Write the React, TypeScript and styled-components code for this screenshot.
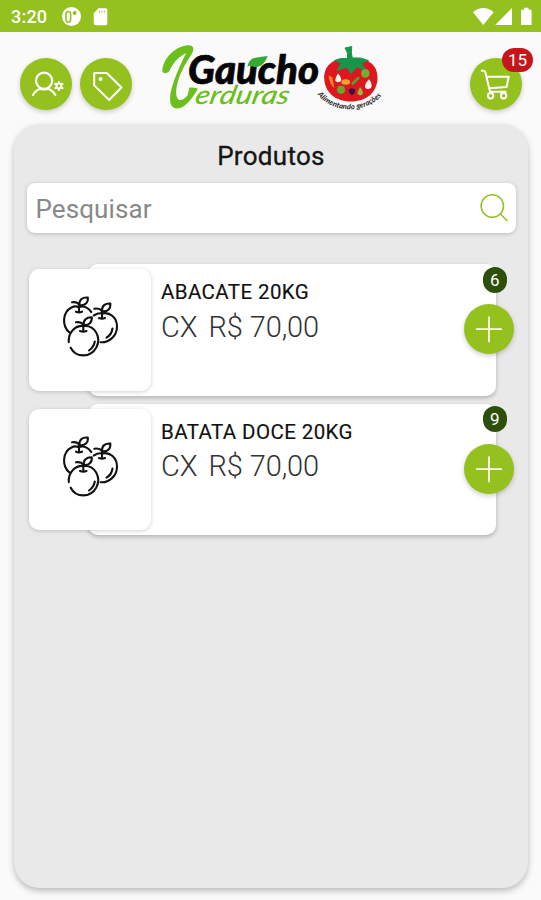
import React from "react";
import styled, { createGlobalStyle } from "styled-components";

const GREEN = "#95c11f";

const GlobalStyle = createGlobalStyle`
  * { box-sizing: border-box; }
  body { margin: 0; background: #fafafa; font-family: Roboto, "Liberation Sans", sans-serif; }
  svg { display: block; flex: none; }
`;

const Screen = styled.div`
  display: flex;
  flex-direction: column;
  height: 900px;
  overflow: hidden;
  background: #fafafa;
`;

const StatusBar = styled.div`
  height: 32px;
  flex: none;
  display: flex;
  align-items: center;
  padding: 1px 9px 0 11px;
  background: ${GREEN};
  color: #fff;
`;

const Clock = styled.span`
  width: 51px;
  font-size: 18px;
  font-weight: 500;
  line-height: 32px;
  letter-spacing: 0.2px;
`;

const StatusRight = styled.div`
  margin-left: auto;
`;

const Header = styled.header`
  height: 92px;
  flex: none;
  display: flex;
  align-items: flex-start;
  padding: 6px 19px 0 20px;
`;

const Actions = styled.div`
  display: flex;
  gap: 8px;
  margin-top: 20px;
`;

const LogoBox = styled.div`
  margin-left: 23px;
`;

const RoundButton = styled.button<{ $size: number }>`
  position: relative;
  width: ${(p) => p.$size}px;
  height: ${(p) => p.$size}px;
  padding: 0;
  border: 0;
  border-radius: 50%;
  background: ${GREEN};
  box-shadow: 0 2px 5px rgba(0, 0, 0, 0.2);
`;

const CartArea = styled.div`
  margin: 20px 0 0 auto;
`;

const CartBadge = styled.span`
  position: absolute;
  left: 32px;
  top: -10px;
  width: 31px;
  height: 24px;
  border-radius: 12px;
  background: #c4161c;
  color: #fff;
  font: 400 17px/25px Roboto, sans-serif;
  text-align: center;
`;

const Panel = styled.main`
  width: 514px;
  height: 764px;
  margin-left: 14px;
  padding: 0 13px;
  border-radius: 26px;
  background: #e9e9e9;
  box-shadow: 0 3px 6px rgba(0, 0, 0, 0.25);
`;

const Title = styled.h1`
  margin: 0;
  padding-top: 15px;
  height: 59px;
  font-size: 26px;
  line-height: 34px;
  font-weight: 400;
  letter-spacing: 0.3px;
  text-align: center;
  color: #151515;
  -webkit-text-stroke: 0.3px #151515;
`;

const SearchField = styled.div`
  height: 50px;
  display: flex;
  align-items: center;
  justify-content: space-between;
  margin-right: -1px;
  padding: 0 7px 0 8.5px;
  border-radius: 8px;
  background: #fff;
  box-shadow: 0 1px 4px rgba(0, 0, 0, 0.2);
`;

const Placeholder = styled.span`
  padding-top: 2px;
  font-size: 26px;
  line-height: 32px;
  letter-spacing: 0.1px;
  color: #888;
`;

const List = styled.div`
  display: flex;
  flex-direction: column;
  gap: 8px;
  padding-top: 31px;
`;

const Item = styled.article`
  display: flex;
  height: 131.5px;
  padding-left: 2px;
`;

const Thumb = styled.div`
  position: relative;
  z-index: 1;
  width: 122px;
  height: 121.5px;
  margin: 5px -63px 0 0;
  border-radius: 10px;
  background: #fff;
  box-shadow: 0 1px 4px rgba(0, 0, 0, 0.18);
`;

const Card = styled.div`
  position: relative;
  width: 408px;
  height: 131.5px;
  padding: 16px 0 0 73px;
  border-radius: 10px;
  background: #fff;
  box-shadow: 0 2px 4px rgba(0, 0, 0, 0.24);
`;

const Name = styled.div`
  font-size: 20.5px;
  line-height: 25px;
  letter-spacing: 0.4px;
  color: #111;
  white-space: nowrap;
  -webkit-text-stroke: 0.15px #111;
`;

const Price = styled.div`
  display: flex;
  gap: 11px;
  margin-top: 3.5px;
  font-size: 29px;
  line-height: 36px;
  font-weight: 300;
  letter-spacing: -0.1px;
  color: #333;
`;

const Count = styled.span`
  position: absolute;
  left: 395px;
  top: 2.5px;
  width: 23.5px;
  height: 26px;
  border-radius: 13px;
  background: #2e4f0b;
  color: #fff;
  font-size: 17px;
  line-height: 26px;
  text-align: center;
`;

const AddSlot = styled.div`
  position: absolute;
  left: 376px;
  top: 40px;
`;

const StatusLeftIcons = () => (
  <svg width="48" height="20" viewBox="62 7 48 20">
    <circle cx="71.5" cy="16.5" r="9.5" fill="#fff" />
    <rect x="66" y="11.5" width="4.6" height="10.5" rx="2.3" fill="none" stroke={GREEN} strokeWidth="1.6" />
    <circle cx="74.6" cy="13" r="2" fill={GREEN} />
    <path d="M98.5 8.3H105.5Q107.3 8.3 107.3 10V23.6Q107.3 25.2 105.5 25.2H95.5Q93.8 25.2 93.8 23.6V13.3Z" fill="#fff" />
    <path d="M99.6 10.4v2.4M102 10.4v2.4M104.4 10.4v2.4" stroke={GREEN} strokeWidth="1" opacity="0.75" />
  </svg>
);

const StatusRightIcons = () => (
  <svg width="60" height="20" viewBox="472 7 60 20">
    <path d="M473 12.2Q483.2 4 493.6 12.2L483.3 25Z" fill="#fff" />
    <path d="M512 8V25H495.2Z" fill="#fff" />
    <path d="M521 9.8h3V7.7h4.6v2.1h3V25H521Z" fill="#fff" />
  </svg>
);

const UserGearIcon = () => (
  <svg width="52" height="52" fill="none" stroke="#fff" strokeWidth="2.2" strokeLinecap="round">
    <circle cx="24.1" cy="22.8" r="8.1" />
    <path d="M13 37Q15.9 31.8 20.4 30.7C22.5 31.6 25.7 31.6 27.9 30.7Q32.4 32 35.4 37" />
    <circle cx="38.9" cy="28" r="2.4" strokeWidth="2" />
    <path d="M38.9 24v.7M38.9 31.3v.7M35.3 25.9l.6.4M41.9 29.7l.6.4M35.3 30.1l.6-.4M41.9 26.3l.6-.4" strokeWidth="2" />
  </svg>
);

const TagIcon = () => (
  <svg width="52" height="52" fill="none" stroke="#fff" strokeWidth="2" strokeLinejoin="round">
    <path d="M14.2 15H26.8L41.4 29.5L29.2 42L14.2 27.4Z" />
    <circle cx="20.6" cy="21" r="1.9" fill="#fff" stroke="none" />
  </svg>
);

const CartIcon = () => (
  <svg width="52" height="52" fill="none" stroke="#fff" strokeWidth="2" strokeLinecap="round" strokeLinejoin="round">
    <path d="M11.7 12.7h2.2q1 .2 1.4 1.3L20 33.6M16.4 18.7H38.7L36.6 29L19 30.2M20 33.8h15.6" />
    <circle cx="20.6" cy="37.8" r="2.7" />
    <circle cx="33.6" cy="37.8" r="2.7" />
  </svg>
);

const SearchIcon = () => (
  <svg width="30" height="30" fill="none" stroke={GREEN} strokeWidth="1.5" strokeLinecap="round">
    <circle cx="13.3" cy="13" r="11.2" />
    <path d="M21.3 21L28 27.5" />
  </svg>
);

const PlusIcon = () => (
  <svg width="50" height="50" stroke="#fff" strokeWidth="1.7" strokeLinecap="round">
    <path d="M25 13.2V37.6M12.8 25.2H37.2" />
  </svg>
);

const FruitIcon = () => (
  <svg width="122" height="121.5" viewBox="29 269 122 121.5" fill="none" stroke="#111" strokeWidth="2.1" strokeLinecap="round" strokeLinejoin="round">
    <path d="M69.5 332.5C61.5 326 62.5 312 71.5 307.5Q75 305.5 78.8 307.2Q85.5 304.5 91.3 312" />
    <path d="M79 312V304.5Q77 301.5 72 302.3M79.5 305C79 299.5 82.5 297 87.8 297.5C88.5 302.5 85 306 79.5 305ZM76 311.7q3 1.3 6 0" />
    <path d="M93.8 315.5Q98.5 312.6 102 313.5C110 311.7 117 317.5 117 326.5C117 336.5 108.5 343 100.5 342.2" />
    <path d="M102 318V311Q99.5 307.8 94.3 308.8M102 311.2C101.6 305.7 105.3 303.2 110.3 303.5C111 308.7 107.3 312.3 102 311.2ZM99 318q3 1.3 6 0M112.5 328.5Q111.6 334.8 106.5 337.6" />
    <path d="M70.7 347.7C76 358 90.5 358 96.3 347.5C101.8 337 94.5 325 84 326C75.5 325 68 332 68.8 342.2" />
    <path d="M83.3 331V324.5Q81 321.5 76 322.3M83.6 325C83.2 320 86.5 317 91.8 317.3C92.2 322.3 89 325.7 83.6 325ZM80 331q3.3 1.3 6.5 0M94.8 341.5Q93.8 347.2 89 350.5" />
  </svg>
);

const Logo = () => (
  <svg width="235" height="80" viewBox="155 38 235 80" role="img" aria-label="Gaúcho Verduras">
    <path d="M162.3 71C163 57.5 176 46 188 45.2C194.8 44.7 194.5 50.5 190.5 56C182 68.5 177 80 176.2 91C175.8 101.5 181 102.8 187.5 95.5L189.5 87.5Q194 87 198 88.8C192 99 184.5 109.2 176.5 108.5C165 107 169.5 86 186.2 53C178.5 56.5 173 63 169.2 71.2C166.5 73.8 163 73.8 162.3 71Z" fill="#6abf1b" />
    <text x="188" y="84" textLength="131" lengthAdjust="spacingAndGlyphs" fontFamily="Lato" fontWeight="900" fontStyle="italic" fontSize="40" fill="#050505" stroke="#050505" strokeWidth="0.7">Gaucho</text>
    <path d="M247.5 67C249 57 256 57.5 267.5 56C264 66.5 257.5 69 249.5 65.5Z" fill="#35a936" />
    <text transform="translate(194 103.5) skewX(-12)" textLength="94" lengthAdjust="spacingAndGlyphs" fontFamily="Lato" fontStyle="italic" fontWeight="500" fontSize="26" fill="#6abf1b">erduras</text>
    <path d="M351 59C366 56.5 378 64 377.5 78C377 93 366 101.5 351 101.5C335 101.5 324.5 92 324.2 78C324 64 336 56.5 351 59Z" fill="#dc1720" />
    <path d="M334.5 60.5Q341 57.5 347.5 58.5Q348.8 53 345 48L351.8 46.5Q350.5 52 352.3 58Q361 57 368.5 60.5L361 63L366 70L356.5 67L351 73.5L346.8 67L337 70.5L341.5 62.8Z" fill="#16964a" stroke="#16964a" strokeWidth="1" />
    <path d="M328.5 75.5L332.2 77.2L334.3 88Q329.5 84 328.5 75.5Z" fill="#f28a1a" />
    <path d="M338 73.5Q342 78 341 81Q338 83.3 335.3 81Q335 78 338 73.5ZM369 79.3Q373 84.5 371 88Q367.5 90.3 365 87.5Q364.5 84 369 79.3Z" fill="#fff7e8" />
    <ellipse cx="345.7" cy="82" rx="4.4" ry="2.7" fill="#e8a62f" />
    <circle cx="365.3" cy="73.4" r="4.3" fill="#79ad31" />
    <circle cx="341" cy="89.8" r="4" fill="#67a72c" />
    <path d="M352.7 83.5L358.3 78" stroke="#54a42d" strokeWidth="2.5" strokeLinecap="round" />
    <path d="M348.5 89.7q3-3 7 0q-1 5-3.5 5t-3.5-5" fill="#34123f" />
    <path d="M360 87Q364.5 92 362 95Q357.5 96.2 357.5 92.5Z" fill="#91bc35" />
    <path id="tagline" d="M317.5 94.5C332 113 363 115 382 95.5" fill="none" />
    <text fontFamily="Lato" fontSize="7.5" fontStyle="italic" fontWeight="700" fill="#222">
      <textPath href="#tagline" textLength="72">Alimentando gerações</textPath>
    </text>
  </svg>
);

const products = [
  { name: "ABACATE 20KG", unit: "CX", price: "R$ 70,00", count: 6 },
  { name: "BATATA DOCE 20KG", unit: "CX", price: "R$ 70,00", count: 9 },
];

export default function App() {
  return (
    <Screen>
      <GlobalStyle />
      <StatusBar>
        <Clock>3:20</Clock>
        <StatusLeftIcons />
        <StatusRight><StatusRightIcons /></StatusRight>
      </StatusBar>
      <Header>
        <Actions>
          <RoundButton $size={52} aria-label="Conta"><UserGearIcon /></RoundButton>
          <RoundButton $size={52} aria-label="Ofertas"><TagIcon /></RoundButton>
        </Actions>
        <LogoBox><Logo /></LogoBox>
        <CartArea>
          <RoundButton $size={52} aria-label="Carrinho">
            <CartIcon />
            <CartBadge>15</CartBadge>
          </RoundButton>
        </CartArea>
      </Header>
      <Panel>
        <Title>Produtos</Title>
        <SearchField>
          <Placeholder>Pesquisar</Placeholder>
          <SearchIcon />
        </SearchField>
        <List>
          {products.map((p) => (
            <Item key={p.name}>
              <Thumb><FruitIcon /></Thumb>
              <Card>
                <Name>{p.name}</Name>
                <Price><span>{p.unit}</span><span>{p.price}</span></Price>
                <Count>{p.count}</Count>
                <AddSlot>
                  <RoundButton $size={50} aria-label="Adicionar"><PlusIcon /></RoundButton>
                </AddSlot>
              </Card>
            </Item>
          ))}
        </List>
      </Panel>
    </Screen>
  );
}
